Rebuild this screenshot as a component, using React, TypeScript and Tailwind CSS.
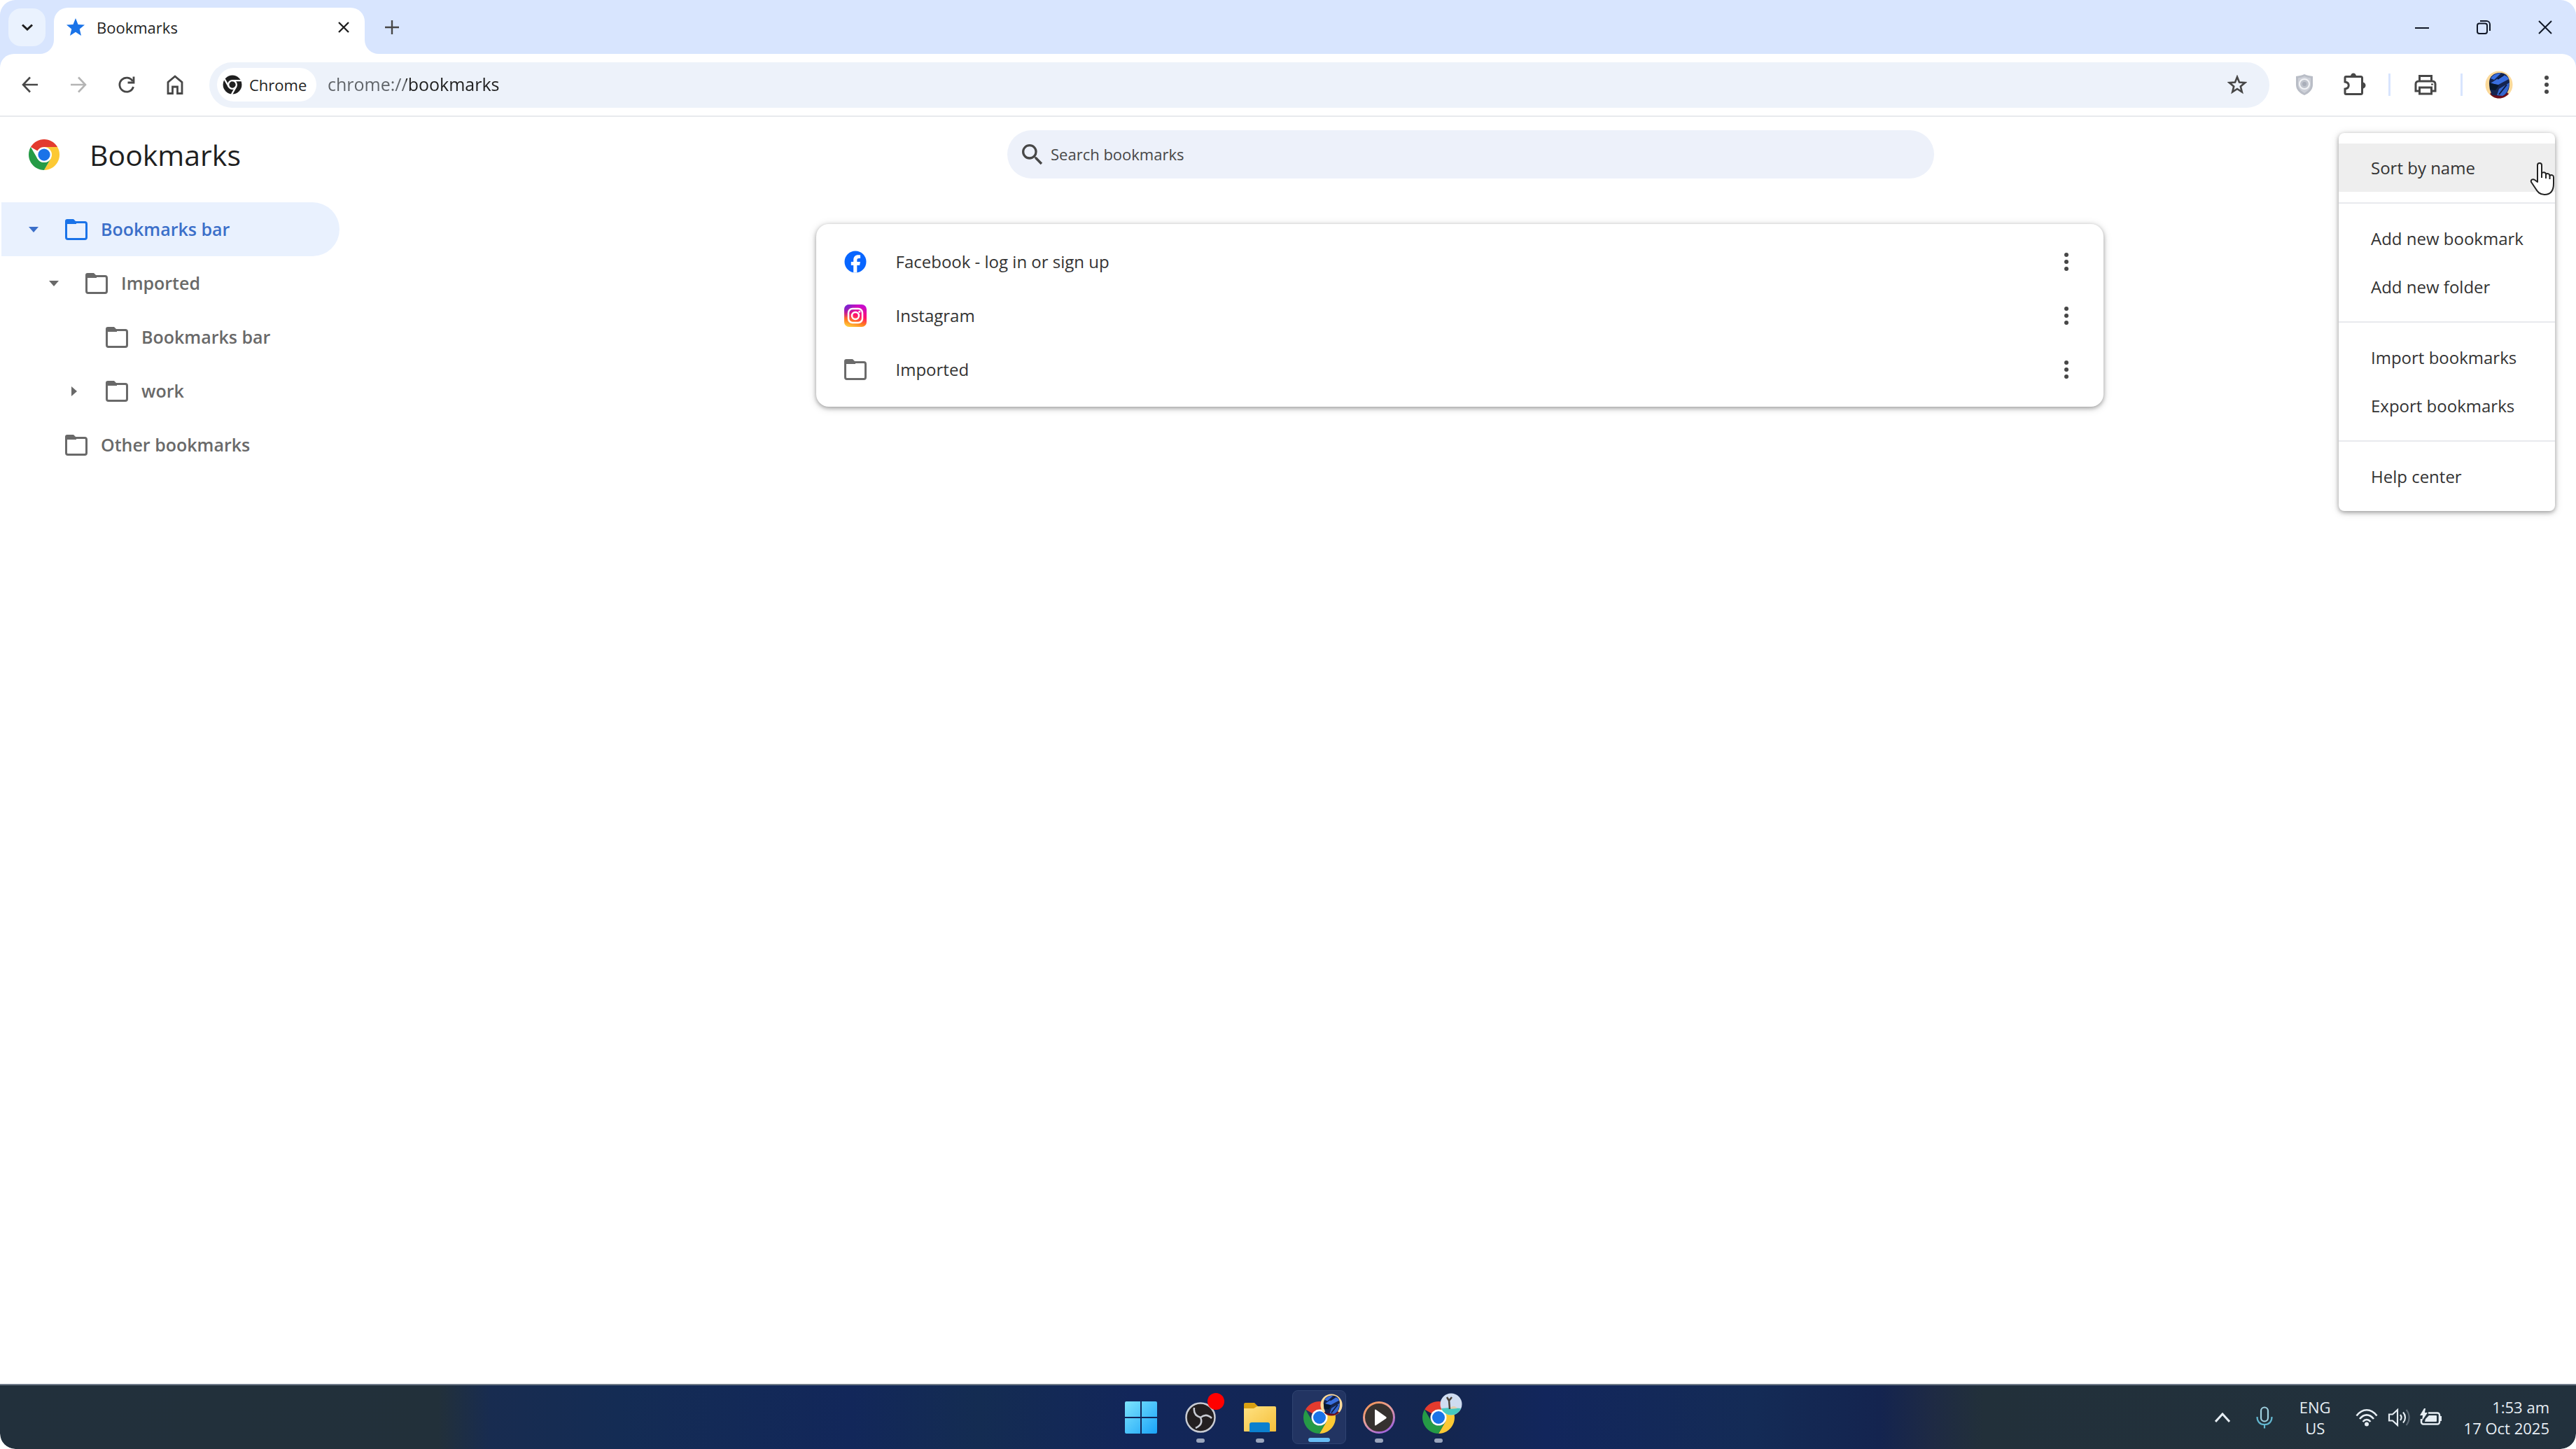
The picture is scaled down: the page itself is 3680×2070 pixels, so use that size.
import React, { useState } from 'react'
import clsx from 'clsx'
import { MdSearch } from 'react-icons/md'

type IconProps = { className?: string }

const FolderIcon: React.FunctionComponent<IconProps> = ({ className }) => (
	<svg viewBox="0 0 32 30" className={className} fill="none" aria-hidden="true">
		<rect x="1.5" y="4.5" width="29" height="24" rx="2.5" stroke="currentColor" strokeWidth="3" />
		<path d="M0 6V3a3 3 0 0 1 3-3h9l4 4v3H0z" fill="currentColor" />
	</svg>
)

const DotsIcon: React.FunctionComponent<IconProps> = ({ className }) => (
	<svg viewBox="0 0 8 32" className={className} fill="currentColor" aria-hidden="true">
		<circle cx="4" cy="6" r="3" />
		<circle cx="4" cy="16" r="3" />
		<circle cx="4" cy="26" r="3" />
	</svg>
)

const ChromeLogo: React.FunctionComponent<IconProps> = ({ className }) => (
	<svg viewBox="0 0 48 48" className={className} aria-hidden="true">
		<path d="M24 24 4.1 12.5A23 23 0 0 1 43.9 12.5H24z" fill="#e33b2e" />
		<path d="M43.9 12.5A23 23 0 0 1 24 47l10-17.3L24 12.5z" fill="#fcc934" />
		<path d="M4.1 12.5A23 23 0 0 0 24 47l10-17.3A11.5 11.5 0 0 1 14 29.7z" fill="#259b46" />
		<circle cx="24" cy="24" r="11.5" fill="#fff" />
		<circle cx="24" cy="24" r="9" fill="#1a73e8" />
	</svg>
)

const ChromeMono: React.FunctionComponent<IconProps> = ({ className }) => (
	<svg viewBox="0 0 48 48" className={className} fill="none" aria-hidden="true">
		<circle cx="24" cy="24" r="23" fill="#1f1f1f" />
		<circle cx="24" cy="24" r="10" stroke="#fff" strokeWidth="4" />
		<path d="M24 14h22M15.3 29 4.5 10M32.7 29 22 48" stroke="#fff" strokeWidth="4" />
	</svg>
)

const HelmetAvatar: React.FunctionComponent<IconProps> = ({ className }) => (
	<svg viewBox="0 0 40 40" className={className} aria-hidden="true">
		<circle cx="20" cy="20" r="19.5" fill="#fbd99a" />
		<path d="M7 33c6-5 20-5 27 0-4 4-8 6.500-14 6.500S10 37 7 33z" fill="#6b0d1c" />
		<path d="M6 17C6 8 13 3 21 3c9 0 14 6 14 14 0 10-3 17-10 19l-15-1-3-8z" fill="#15244f" />
		<path d="M8 11c4-6 10-8 15-7.500L13 13zM34 12 19 20l-11-2 18-12c4 1 7 3 8 6z" fill="#3a6fe0" />
		<path d="M35 17 20 26l-3 9 8 1c6-3 9-9 10-19z" fill="#3566cf" />
		<path d="M6 17l14 4-5 7-8-1z" fill="#08172c" />
		<path d="M31 20 20 34M27 6l-9 6" stroke="#0d1a3d" strokeWidth="2" />
	</svg>
)

const SkyAvatar: React.FunctionComponent<IconProps> = ({ className }) => (
	<svg viewBox="0 0 32 32" className={className} aria-hidden="true">
		<circle cx="16" cy="16" r="15.500" fill="#cfdcf0" />
		<path d="M2 22c8-1 20-1 28 0a15 15 0 0 1-28 0z" fill="#45c9c0" />
		<path d="M13 23c4-5 9-5 12-1z" fill="#e3cfae" />
		<path d="M10 6l3 5 4-5M13 10l1 13" stroke="#4b4339" strokeWidth="2.500" fill="none" />
	</svg>
)

const ShieldIcon = () => (
	<svg viewBox="0 0 26 32" className="h-8 w-7" aria-hidden="true">
		<path d="M13 1c4 2 8 2 12 3v12c0 7-5 12-12 15C6 28 1 23 1 16V4c4-1 8-1 12-3z" fill="#b9bdc6" />
		<path d="M13 4c3 1.500 6 2 9 2.500V16c0 5-4 9-9 12-5-3-9-7-9-12V6.500C7 6 10 5.500 13 4z" fill="#cdd0d8" />
		<circle cx="13" cy="15" r="7" fill="#c0c4cd" stroke="#f3f4f7" strokeWidth="2" />
		<circle cx="13" cy="15" r="3" fill="#a9aeb9" />
	</svg>
)

const PuzzleIcon = () => (
	<svg viewBox="0 0 32 34" className="h-[34px] w-8" fill="none" aria-hidden="true">
		<path
			d="M3.500 5.500h21a2 2 0 0 1 2 2v21a2 2 0 0 1-2 2h-21a1.500 1.500 0 0 1-1.500-1.500v-6c7-1 7-9 0-10V7a1.500 1.500 0 0 1 1.500-1.500z"
			stroke="#474747"
			strokeWidth="3"
		/>
		<path d="M10 5a4 4.500 0 0 1 8 0zM27 13.500a4.500 4.500 0 0 1 0 9z" fill="#474747" />
	</svg>
)

const PrinterIcon = () => (
	<svg viewBox="0 0 32 32" className="size-8" fill="none" stroke="#474747" strokeWidth="3" aria-hidden="true">
		<path d="M7.500 11V3.500h17V11M7.500 25H2V15a4 4 0 0 1 4-4h20a4 4 0 0 1 4 4v10h-5.500" />
		<rect x="7.500" y="20" width="17" height="9" />
		<path d="M24 15.500h3" strokeWidth="2" />
	</svg>
)

const PointerCursor = () => (
	<svg
		viewBox="0 0 36 48"
		className="pointer-events-none absolute top-[42px] right-0 h-12 w-9"
		fill="#fff"
		stroke="#222"
		strokeWidth="2"
		strokeLinejoin="round"
		aria-hidden="true"
	>
		<path d="M11 28V4a3 3 0 0 1 6 0v12c1-3 6-2 6 1 2-2 5-1 5.500 2 2-2 5.500-1 5.500 2v9c0 10-4 16-13 16-7 0-10-4-13-9l-6-9c-1-3 2-5 5-3z" />
		<path d="M17 13v9M23 17v6M28.500 19v5" fill="none" />
	</svg>
)

const TabFlare: React.FunctionComponent<IconProps> = ({ className }) => (
	<svg viewBox="0 0 20 20" className={clsx('absolute bottom-0 size-5', className)} fill="#fff" aria-hidden="true">
		<path d="M20 0v20H0A20 20 0 0 0 20 0z" />
	</svg>
)

const TabStrip = () => (
	<header className="flex h-[77px] items-center bg-[#d8e5fe] pl-3">
		<button aria-label="Search tabs" className="flex h-[54px] w-[53px] items-center justify-center rounded-[18px] bg-[#eaf2fe]">
			<svg viewBox="0 0 16 10" className="h-[10px] w-4" fill="none" stroke="#1f1f1f" strokeWidth="3" aria-hidden="true">
				<path d="M1 1.500 8 8l7-6.500" />
			</svg>
		</button>
		<div className="relative ml-3 flex h-[66px] w-[444px] items-center self-end rounded-t-[20px] bg-white pr-[22px] pb-[10px] pl-[18px]">
			<TabFlare className="-left-5" />
			<TabFlare className="-right-5 -scale-x-100" />
			<svg viewBox="0 0 24 24" className="size-[26px]" fill="#1a73e8" aria-hidden="true">
				<path d="m12 0 3.300 8.200 8.700.600-6.700 5.600L19.400 23 12 18.300 4.600 23l2.100-8.600L0 8.800l8.700-.600z" />
			</svg>
			<span className="ml-[17px] flex-1 text-[22px] text-[#1f1f1f]">Bookmarks</span>
			<button aria-label="Close tab">
				<svg viewBox="0 0 16 16" className="size-4" stroke="#1f1f1f" strokeWidth="2.400" aria-hidden="true">
					<path d="m1 1 14 14M15 1 1 15" />
				</svg>
			</button>
		</div>
		<button aria-label="New tab" className="ml-[29px]">
			<svg viewBox="0 0 20 20" className="size-5" stroke="#474747" strokeWidth="2.400" aria-hidden="true">
				<path d="M10 0v20M0 10h20" />
			</svg>
		</button>
		<div className="ml-auto flex items-center gap-[68px] pr-[34px]">
			<button aria-label="Minimize">
				<svg viewBox="0 0 20 20" className="size-5" stroke="#111827" strokeWidth="2" aria-hidden="true">
					<path d="M0 11h20" />
				</svg>
			</button>
			<button aria-label="Restore">
				<svg viewBox="0 0 20 20" className="size-5" fill="none" stroke="#111827" strokeWidth="2" aria-hidden="true">
					<rect x="1" y="4.500" width="14" height="14.500" rx="3" />
					<path d="M5 1h9a5 5 0 0 1 5 5v9" />
				</svg>
			</button>
			<button aria-label="Close">
				<svg viewBox="0 0 20 20" className="size-5" stroke="#111827" strokeWidth="2" aria-hidden="true">
					<path d="m1 1 18 18M19 1 1 19" />
				</svg>
			</button>
		</div>
	</header>
)

const Toolbar = () => {
	const [url, setUrl] = useState('chrome://bookmarks')

	return (
		<div className="bg-[#d8e5fe]">
			<div className="flex h-[90px] items-center rounded-t-[20px] border-b-2 border-[#e8eaed] bg-white pl-[31px]">
				<nav aria-label="Navigation" className="flex items-center gap-[45px] text-[#474747]">
					<button aria-label="Back">
						<svg viewBox="0 0 24 24" className="size-6" fill="none" stroke="currentColor" strokeWidth="2.600" aria-hidden="true">
							<path d="M12 1.500 2 12l10 10.500M2 12h21" />
						</svg>
					</button>
					<button aria-label="Forward" className="text-[#b4b4b4]">
						<svg viewBox="0 0 24 24" className="size-6" fill="none" stroke="currentColor" strokeWidth="2.600" aria-hidden="true">
							<path d="m12 1.500 10 10.500-10 10.500M22 12H1" />
						</svg>
					</button>
					<button aria-label="Reload">
						<svg viewBox="0 0 24 24" className="size-6" fill="none" stroke="currentColor" strokeWidth="2.800" aria-hidden="true">
							<path d="M21.500 15a10 10 0 1 1-1-8" />
							<path d="M22 .5V9h-8.500" />
						</svg>
					</button>
					<button aria-label="Home">
						<svg viewBox="0 0 24 28" className="h-7 w-6" fill="none" stroke="currentColor" strokeWidth="2.800" aria-hidden="true">
							<path d="M2 26.500V10.500L12 2l10 8.500v16h-6.500V17h-7v9.500z" />
						</svg>
					</button>
				</nav>
				<div className="ml-[37px] flex h-[65px] flex-1 items-center rounded-full bg-[#edf2fa] pr-8 pl-[11px]">
					<button className="flex h-12 w-[142px] items-center gap-[10px] rounded-full bg-white pl-2 text-[22px] font-medium text-[#1f1f1f]">
						<ChromeMono className="size-[28px]" />
						Chrome
					</button>
					<input
						aria-label="Address and search bar"
						value={url}
						onChange={e => setUrl(e.target.value)}
						className="ml-4 flex-1 bg-[linear-gradient(90deg,#5f6368_112px,#1f1f1f_112px)] bg-clip-text text-[25px] text-transparent outline-none"
					/>
					<button aria-label="Bookmark this page">
						<svg viewBox="0 0 28 28" className="size-7" fill="none" stroke="#474747" strokeWidth="2.600" aria-hidden="true">
							<path d="m14 3 3 7.600 8 .600-6.200 5.200 2 8L14 20l-6.800 4.400 2-8L3 11.200l8-.600z" />
						</svg>
					</button>
				</div>
				<div className="flex items-center pr-[38px] pl-9">
					<button aria-label="Site protection">
						<ShieldIcon />
					</button>
					<button aria-label="Extensions" className="ml-[42px]">
						<PuzzleIcon />
					</button>
					<span className="ml-8 h-8 w-[3px] bg-[#d8e5fe]" />
					<button aria-label="Print" className="ml-[34px]">
						<PrinterIcon />
					</button>
					<span className="ml-[34px] h-8 w-[3px] bg-[#d8e5fe]" />
					<button aria-label="Profile" className="ml-8">
						<HelmetAvatar className="size-10" />
					</button>
					<button aria-label="Customize and control" className="ml-[44px] text-[#474747]">
						<DotsIcon className="h-9 w-2" />
					</button>
				</div>
			</div>
		</div>
	)
}

const folders = [
	{ id: 1, label: 'Bookmarks bar', indent: 'pl-[37px]', arrow: 'down', selected: true },
	{ id: 2, label: 'Imported', indent: 'pl-[66px]', arrow: 'down' },
	{ id: 3, label: 'Bookmarks bar', indent: 'pl-[95px]', arrow: '' },
	{ id: 4, label: 'work', indent: 'pl-[95px]', arrow: 'right' },
	{ id: 5, label: 'Other bookmarks', indent: 'pl-[37px]', arrow: '' },
]

const Sidebar = () => (
	<nav aria-label="Bookmark folders" className="w-[490px] shrink-0 pt-[34px] pr-[5px] pl-[2px]">
		{folders.map(folder => (
			<button
				key={folder.id}
				className={clsx(
					'flex h-[77px] w-full items-center rounded-r-full text-[25px] font-semibold',
					folder.indent,
					folder.selected ? 'bg-[#e9f1fe] text-[#3b6fc9]' : 'text-[#696969]'
				)}
			>
				<svg
					viewBox="0 0 18 18"
					className={clsx('size-[18px]', folder.arrow === 'right' && '-rotate-90')}
					fill="currentColor"
					aria-hidden="true"
				>
					{folder.arrow && <path d="M2 5h14l-7 8z" />}
				</svg>
				<FolderIcon className={clsx('ml-9 h-[30px] w-8', folder.selected && 'text-[#1a73e8]')} />
				<span className="ml-[19px]">{folder.label}</span>
			</button>
		))}
	</nav>
)

const FacebookIcon = () => (
	<svg viewBox="0 0 32 32" className="size-8" aria-hidden="true">
		<circle cx="16" cy="16" r="15.500" fill="#0866ff" />
		<path d="M13.200 31.500V21H9.800v-5h3.400v-2.200c0-5 2.400-7.600 7-7.600 1 0 2.200.200 2.900.400v4.300h-1.900c-2.200 0-2.900.900-2.900 2.700V16h4.600l-.800 5h-3.800v10.500z" fill="#fff" />
	</svg>
)

const InstagramIcon = () => (
	<svg viewBox="0 0 32 32" className="size-8" fill="none" aria-hidden="true">
		<defs>
			<linearGradient id="insta" x1="0.300" y1="1" x2="0.600" y2="0">
				<stop offset="0" stopColor="#ffc93c" />
				<stop offset="0.250" stopColor="#ff7a1f" />
				<stop offset="0.550" stopColor="#ff0f6e" />
				<stop offset="1" stopColor="#c60bd0" />
			</linearGradient>
			<radialGradient id="instaCorner" cx="0" cy="0" r="0.600">
				<stop offset="0" stopColor="#5b2be0" />
				<stop offset="1" stopColor="#5b2be0" stopOpacity="0" />
			</radialGradient>
		</defs>
		<rect width="32" height="32" rx="7" fill="url(#insta)" />
		<rect width="32" height="32" rx="7" fill="url(#instaCorner)" />
		<rect x="6" y="6" width="20" height="20" rx="6" stroke="#fff" strokeWidth="2.500" />
		<circle cx="16" cy="16" r="5" stroke="#fff" strokeWidth="2.500" />
		<circle cx="21.800" cy="10.200" r="1.500" fill="#fff" />
	</svg>
)

const bookmarks = [
	{ title: 'Facebook - log in or sign up', icon: <FacebookIcon /> },
	{ title: 'Instagram', icon: <InstagramIcon /> },
	{ title: 'Imported', icon: <FolderIcon className="h-[30px] w-8 text-[#6b6b6b]" /> },
]

const BookmarkList = () => (
	<div className="flex-1 pt-[65px]">
		<ul className="mx-auto w-full max-w-[1839px] rounded-[18px] bg-white py-[15px] shadow-[0_2px_6px_rgba(0,0,0,0.35),0_2px_14px_rgba(0,0,0,0.12)]">
			{bookmarks.map(bookmark => (
				<li key={bookmark.title} className="flex h-[77px] items-center pr-[49px] pl-10">
					{bookmark.icon}
					<a href="#" className="ml-[42px] flex-1 text-[24px] text-[#333]">
						{bookmark.title}
					</a>
					<button aria-label={'More actions for ' + bookmark.title} className="text-[#474747]">
						<DotsIcon className="h-8 w-2" />
					</button>
				</li>
			))}
		</ul>
	</div>
)

const menuGroups = [
	['Sort by name'],
	['Add new bookmark', 'Add new folder'],
	['Import bookmarks', 'Export bookmarks'],
	['Help center'],
]

const OptionsMenu = () => (
	<div
		role="menu"
		className="absolute top-[23px] right-[30px] w-[309px] rounded-lg bg-white shadow-[0_2px_6px_rgba(0,0,0,0.35),0_2px_14px_rgba(0,0,0,0.12)]"
	>
		{menuGroups.map((group, i) => (
			<div key={group[0]} className={clsx('py-[15px]', i > 0 && 'border-t-2 border-[#e8eaed]')}>
				{group.map(item => (
					<button
						key={item}
						role="menuitem"
						className={clsx(
							'block h-[69px] w-full pl-[46px] text-left text-[24px] text-[#333]',
							item === 'Sort by name' && 'bg-[#eeeeee]'
						)}
					>
						{item}
					</button>
				))}
			</div>
		))}
		<PointerCursor />
	</div>
)

const BookmarksPage = () => (
	<main className="relative flex flex-1 flex-col">
		<div className="flex h-[88px] items-end">
			<div className="flex h-[72px] w-[522px] items-center pt-1 pl-10">
				<ChromeLogo className="size-[46px]" />
				<h1 className="ml-[42px] text-[41px] leading-none font-medium text-[#1f1f1f]">Bookmarks</h1>
			</div>
			<div className="flex flex-1 justify-center">
				<label className="flex h-[69px] w-full max-w-[1324px] items-center gap-[6px] rounded-full bg-[#edf1fa] pl-4">
					<MdSearch className="size-10 text-[#474747]" />
					<input
						type="search"
						aria-label="Search bookmarks"
						placeholder="Search bookmarks"
						className="flex-1 text-[22px] font-medium outline-none placeholder:text-[#474747]"
					/>
				</label>
			</div>
		</div>
		<div className="flex flex-1">
			<Sidebar />
			<BookmarkList />
		</div>
		<OptionsMenu />
	</main>
)

const WindowsLogo = () => (
	<svg viewBox="0 0 46 46" className="size-[46px]" aria-hidden="true">
		<defs>
			<linearGradient id="win" x1="0" y1="0" x2="1" y2="1">
				<stop offset="0" stopColor="#7de4fd" />
				<stop offset="1" stopColor="#1aa3f8" />
			</linearGradient>
		</defs>
		<path d="M2 0h20v22H0V2a2 2 0 0 1 2-2zM24 0h20a2 2 0 0 1 2 2v20H24zM0 24h22v22H2a2 2 0 0 1-2-2zM24 24h22v20a2 2 0 0 1-2 2H24z" fill="url(#win)" />
	</svg>
)

const ObsLogo = () => (
	<svg viewBox="0 0 46 46" className="size-[46px]" fill="none" aria-hidden="true">
		<circle cx="23" cy="23" r="20.500" fill="#231f20" stroke="#c8cbd3" strokeWidth="2.500" />
		<path d="M14 9c-1 7 2 12 9 14M23 23c6-5 11-4 16 1M23 23c3 7 0 12-7 15" stroke="#c8cbd3" strokeWidth="2.500" />
	</svg>
)

const ExplorerLogo = () => (
	<svg viewBox="0 0 48 44" className="h-[44px] w-12" aria-hidden="true">
		<defs>
			<linearGradient id="folder" x1="0" y1="0" x2="1" y2="1">
				<stop offset="0" stopColor="#ffe282" />
				<stop offset="1" stopColor="#f5bf3a" />
			</linearGradient>
		</defs>
		<path d="M1 13V3a2 2 0 0 1 2-2h13l5 5v7z" fill="#d9a012" />
		<path d="M1 9h14l5-3h25a2 2 0 0 1 2 2v33a1 1 0 0 1-1 1H2a1 1 0 0 1-1-1z" fill="url(#folder)" />
		<path d="M9 43V32a3 3 0 0 1 3-3h23a3 3 0 0 1 3 3v11z" fill="#0b80cf" />
	</svg>
)

const PlayerLogo = () => (
	<svg viewBox="0 0 48 48" className="size-12" aria-hidden="true">
		<defs>
			<linearGradient id="ring" x1="0" y1="0" x2="0.600" y2="1">
				<stop offset="0" stopColor="#f5914a" />
				<stop offset="0.500" stopColor="#e8a09a" />
				<stop offset="1" stopColor="#a568d8" />
			</linearGradient>
		</defs>
		<circle cx="24" cy="24" r="21.500" fill="#35312f" stroke="url(#ring)" strokeWidth="3" />
		<path d="M18 13.500v21a1 1 0 0 0 1.500.800L34 25.500a1.500 1.500 0 0 0 0-2.500L19.500 12.700a1 1 0 0 0-1.500.800z" fill="#fff" />
	</svg>
)

const apps = [
	{ name: 'Start', icon: <WindowsLogo />, state: 'idle' },
	{ name: 'OBS Studio', icon: <ObsLogo />, state: 'open', badge: <span className="block size-6 rounded-full bg-[#ff0000]" /> },
	{ name: 'File Explorer', icon: <ExplorerLogo />, state: 'open' },
	{ name: 'Google Chrome', icon: <ChromeLogo className="size-12" />, state: 'active', badge: <HelmetAvatar className="size-8" /> },
	{ name: 'Media Player', icon: <PlayerLogo />, state: 'open' },
	{ name: 'Google Chrome (second profile)', icon: <ChromeLogo className="size-12" />, state: 'open', badge: <SkyAvatar className="size-8" /> },
]

const Taskbar = () => (
	<footer className="relative flex h-[93px] items-center justify-end rounded-b-[22px] border-t-2 border-[#6f7a88] bg-[linear-gradient(90deg,#22303c_0%,#22303a_17%,#182c50_19%,#142c54_24%,#12275a_33%,#142c52_38%,#12265a_44%,#14264f_56%,#12265c_60%,#142b56_68%,#14244f_73%,#1e2a44_75%,#22303a_77%,#22313d_100%)] text-[#e6edf3]">
		<div className="absolute inset-y-0 right-0 left-1 flex items-center justify-center gap-2">
			{apps.map(app => (
				<button
					key={app.name}
					aria-label={app.name}
					className={clsx(
						'relative flex h-[77px] w-[77px] items-center justify-center rounded-lg',
						app.state === 'active' && 'border border-[#2f4370] bg-[#223462]'
					)}
				>
					{app.icon}
					{app.badge && <span className="absolute top-1 right-1">{app.badge}</span>}
					{app.state !== 'idle' && (
						<span
							className={clsx(
								'absolute bottom-[2px] h-[6px] rounded-full',
								app.state === 'active' ? 'w-[31px] bg-[#67bdf5]' : 'w-3 bg-[#9aa5bd]'
							)}
						/>
					)}
				</button>
			))}
		</div>
		<div className="relative flex items-center pr-[38px]">
			<button aria-label="Show hidden icons">
				<svg viewBox="0 0 22 14" className="h-[14px] w-[22px]" fill="none" stroke="currentColor" strokeWidth="3" aria-hidden="true">
					<path d="m1 13 10-11 10 11" />
				</svg>
			</button>
			<button aria-label="Microphone in use" className="ml-[37px]">
				<svg viewBox="0 0 24 32" className="h-8 w-6" fill="none" strokeWidth="2.200" aria-hidden="true">
					<rect x="7" y="1.500" width="10" height="20" rx="5" stroke="#9fd0df" />
					<path d="M1.500 15c0 7 4 11 10.500 11s10.500-4 10.500-11M12 26v5.500" stroke="#62b6cf" />
				</svg>
			</button>
			<button className="ml-[38px] text-center text-[22px] leading-[30px]">
				ENG
				<br />
				US
			</button>
			<button aria-label="Network, volume and battery" className="ml-[35px] flex items-center gap-[14px]">
				<svg viewBox="0 0 32 26" className="h-[26px] w-8" fill="none" stroke="currentColor" strokeWidth="2.600" aria-hidden="true">
					<path d="M1.500 10.500C10-.5 22-.5 30.500 10.500M6 15c6-7.500 14-7.500 20 0M10.500 19c3.500-4 7.500-4 11 0" />
					<circle cx="16" cy="22.500" r="3" fill="currentColor" stroke="none" />
				</svg>
				<svg viewBox="0 0 32 28" className="h-7 w-8" fill="none" stroke="currentColor" strokeWidth="2.200" aria-hidden="true">
					<path d="M2 9.500h5L14 3v22l-7-6.500H2zM18 10c2 2.500 2 5.500 0 8M22 6.500c4 4.500 4 10.500 0 15" />
					<path d="M26.500 3c5.500 6.500 5.500 15.500 0 22" stroke="#5a6672" />
				</svg>
				<svg viewBox="0 0 32 28" className="h-7 w-8" fill="none" aria-hidden="true">
					<path d="M12 7.500h13a3 3 0 0 1 3 3v10a3 3 0 0 1-3 3H5a3 3 0 0 1-3-3V16" stroke="currentColor" strokeWidth="2.500" />
					<path d="M13 11h10a1 1 0 0 1 1 1v7a1 1 0 0 1-1 1H7l1-4zM29 12h2v7h-2zM6 1 0 11h4l-1 8 8-12H7l1-6z" fill="currentColor" />
				</svg>
			</button>
			<button className="ml-[31px] text-right text-[22px] leading-[30px]">
				1:53 am
				<br />
				17 Oct 2025
			</button>
		</div>
	</footer>
)

const App = () => (
	<div className="flex min-h-screen flex-col overflow-hidden rounded-[22px] bg-white font-['Open_Sans','Noto_Sans',sans-serif]">
		<TabStrip />
		<Toolbar />
		<BookmarksPage />
		<Taskbar />
	</div>
)

export default App
